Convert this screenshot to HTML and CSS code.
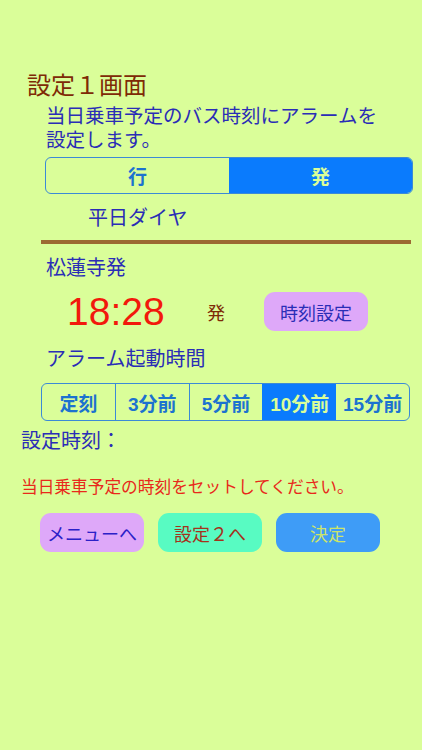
FILE: index.html
```html
<!DOCTYPE html>
<html lang="ja">
<head>
<meta charset="utf-8">
<link rel="stylesheet" href="styles.css">
</head>
<body>
<div class="page">
  <h1 class="title">設定１画面</h1>
  <p class="desc">当日乗車予定のバス時刻にアラームを<br>設定します。</p>
  <div class="seg seg2">
    <div class="seg-item">行</div>
    <div class="seg-item on">発</div>
  </div>
  <div class="diagram">平日ダイヤ</div>
  <div class="rule"></div>
  <div class="stop">松蓮寺発</div>
  <div class="time-row">
    <span class="time">18:28</span>
    <span class="hatsu">発</span>
    <button class="btn btn-purple btn-time">時刻設定</button>
  </div>
  <div class="label">アラーム起動時間</div>
  <div class="seg seg5">
    <div class="seg-item">定刻</div>
    <div class="seg-item">3分前</div>
    <div class="seg-item">5分前</div>
    <div class="seg-item on">10分前</div>
    <div class="seg-item">15分前</div>
  </div>
  <div class="set-time">設定時刻：</div>
  <div class="warn">当日乗車予定の時刻をセットしてください。</div>
  <div class="btn-row">
    <button class="btn btn-purple">メニューへ</button>
    <button class="btn btn-green">設定２へ</button>
    <button class="btn btn-blue">決定</button>
  </div>
</div>
</body>
</html>
```
FILE: styles.css
```css
html, body {
  margin: 0;
  padding: 0;
  background: #dafe99;
}
body {
  font-family: "Liberation Sans", "Noto Sans CJK JP", sans-serif;
  color: #2a2db6;
  width: 422px;
  height: 750px;
  overflow: hidden;
}
.page {
  padding-top: 72px;
  display: flex;
  flex-direction: column;
  align-items: flex-start;
}
.title {
  margin: 0 0 0 27px;
  font-size: 24px;
  line-height: 28px;
  font-weight: normal;
  color: #7e2a06;
}
.desc {
  margin: 4px 0 0 46px;
  font-size: 19.5px;
  line-height: 24px;
}
.seg {
  display: flex;
  border: 1.5px solid #3b8ad6;
  border-radius: 6px;
  overflow: hidden;
  box-sizing: border-box;
}
.seg-item {
  flex: 1;
  display: flex;
  align-items: center;
  justify-content: center;
  color: #1c72d0;
  font-weight: bold;
  font-size: 19px;
}
.seg-item.on {
  background: #0a7bfd;
  color: #dafe99;
}
.seg2 {
  margin: 5px 0 0 45px;
  width: 368px;
  height: 37px;
}
.seg5 {
  margin: 12px 0 0 41px;
  width: 369px;
  height: 38px;
}
.seg5 .seg-item + .seg-item {
  border-left: 1.5px solid #3b8ad6;
}
.seg5 .seg-item.on {
  border-left-color: #0a7bfd;
}
.seg5 .seg-item.on + .seg-item {
  border-left: none;
}
.diagram {
  margin: 12px 0 0 88px;
  font-size: 20px;
  line-height: 24px;
}
.rule {
  margin: 10px 0 0 41px;
  width: 370px;
  height: 4px;
  background: #9c6a32;
}
.stop {
  margin: 12px 0 0 46px;
  font-size: 20px;
  line-height: 24px;
}
.time-row {
  margin: 12px 0 0 0;
  height: 39px;
  display: flex;
  align-items: center;
}
.time {
  margin-left: 67px;
  width: 100px;
  font-size: 39px;
  line-height: 39px;
  color: #f2190c;
  font-family: "Liberation Sans", sans-serif;
}
.hatsu {
  margin-left: 40px;
  font-size: 18px;
  color: #7e2a06;
}
.btn {
  width: 104px;
  height: 39px;
  border: none;
  border-radius: 11px;
  font-family: "Liberation Sans", "Noto Sans CJK JP", sans-serif;
  font-size: 18px;
  padding: 0;
  color: #2a2db6;
}
.btn-time {
  margin-left: 39px;
}
.btn-purple {
  background: #dea8f9;
  color: #2b20c8;
}
.btn-time.btn-purple {
  color: #2a2db6;
}
.btn-green {
  background: #58fbc2;
  color: #a5321c;
}
.btn-blue {
  background: #3e9cf7;
  color: #cce46a;
}
.label {
  margin: 16px 0 0 46px;
  font-size: 20px;
  line-height: 24px;
}
.set-time {
  margin: 8px 0 0 21px;
  font-size: 20px;
  line-height: 24px;
}
.warn {
  margin: 24px 0 0 21px;
  font-size: 16.7px;
  line-height: 22px;
  color: #e8291b;
}
.btn-row {
  margin: 14px 0 0 40px;
  display: flex;
  gap: 14px;
}
```
